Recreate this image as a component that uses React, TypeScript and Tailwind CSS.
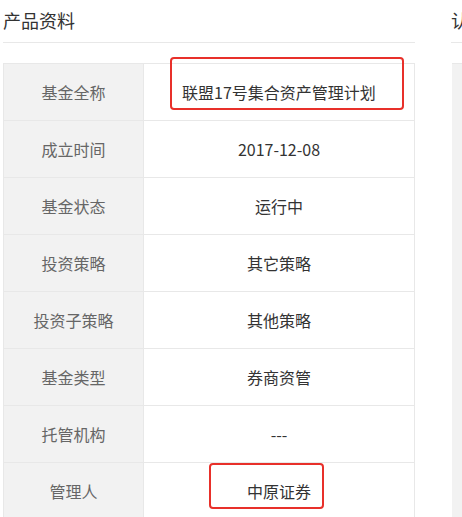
import React from 'react';

interface Row {
  label: string;
  value: string;
}

const rows: Row[] = [
  { label: '基金全称', value: '联盟17号集合资产管理计划' },
  { label: '成立时间', value: '2017-12-08' },
  { label: '基金状态', value: '运行中' },
  { label: '投资策略', value: '其它策略' },
  { label: '投资子策略', value: '其他策略' },
  { label: '基金类型', value: '券商资管' },
  { label: '托管机构', value: '---' },
  { label: '管理人', value: '中原证券' },
];

const font = { fontFamily: '"Microsoft YaHei", "Noto Sans CJK SC", "Noto Sans", sans-serif' };

function Highlight({ className }: { className: string }) {
  return <div className={`pointer-events-none absolute rounded-[4px] border-2 border-[#e8302a] ${className}`} />;
}

export default function App() {
  return (
    <div className="flex h-[517px] w-[462px] gap-[36px] overflow-hidden bg-white pl-[3px]" style={font}>
      <section className="w-[412px] shrink-0">
        <h2 className="h-[43px] border-b border-[#e8e8e8] text-[18px] leading-[40px] text-[#333]">产品资料</h2>

        <div className="mt-[20px] border-x border-t border-[#e8e8e8]">
          {rows.map((row, i) => (
            <div key={row.label} className="relative flex h-[57px] border-b border-[#e8e8e8]">
              <div className="flex w-[139px] items-center justify-center bg-[#f2f2f2] text-[16px] text-[#666]">
                {row.label}
              </div>
              <div className="flex flex-1 items-center justify-center border-l border-[#e8e8e8] text-[16px] text-[#333]">
                {row.value}
              </div>
              {i === 0 && <Highlight className="left-[166px] top-[-7px] h-[53px] w-[234px]" />}
              {i === rows.length - 1 && <Highlight className="left-[205px] top-[0px] h-[46px] w-[115px]" />}
            </div>
          ))}
        </div>
      </section>

      <section className="w-[412px] shrink-0">
        <h2 className="h-[43px] border-b border-[#e8e8e8] text-[18px] leading-[40px] text-[#333]">认购费率</h2>
        <div className="ml-[1px] mt-[20px] h-[460px] border-t border-[#e8e8e8] bg-[#f2f2f2]" />
      </section>
    </div>
  );
}
